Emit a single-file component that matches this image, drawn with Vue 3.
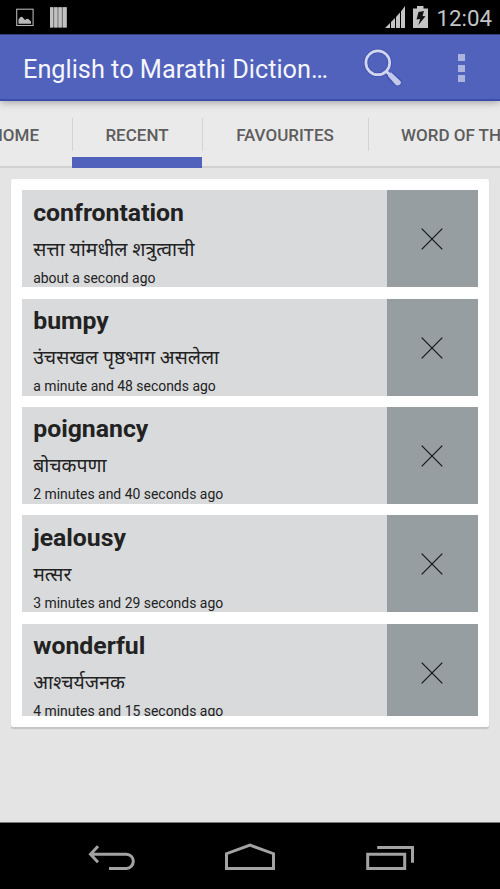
<script setup>
import { ref } from 'vue'

const tabs = [
  { name: 'HOME', cls: 'home' },
  { name: 'RECENT', cls: 'recent' },
  { name: 'FAVOURITES', cls: 'favourites' },
  { name: 'WORD OF THE DAY', cls: 'word' }
]
const activeTab = ref('RECENT')

const words = ref([
  { word: 'confrontation', meaning: 'सत्ता यांमधील शत्रुत्वाची', time: 'about a second ago' },
  { word: 'bumpy', meaning: 'उंचसखल पृष्ठभाग असलेला', time: 'a minute and 48 seconds ago' },
  { word: 'poignancy', meaning: 'बोचकपणा', time: '2 minutes and 40 seconds ago' },
  { word: 'jealousy', meaning: 'मत्सर', time: '3 minutes and 29 seconds ago' },
  { word: 'wonderful', meaning: 'आश्चर्यजनक', time: '4 minutes and 15 seconds ago' }
])

const remove = (item) => {
  words.value = words.value.filter((w) => w !== item)
}
</script>

<template>
  <div class="screen">
    <div class="status-bar">
      <svg class="notifications" width="54" height="24" viewBox="0 0 54 24">
        <rect x="0.7" y="4.2" width="16.4" height="16.3" fill="none" stroke="#b4b4b4" stroke-width="1.1" />
        <path d="M2.500 18.700v-4.200l2-2.400 1.500-.3 3 3.100 2-1.200 1.400.2 2.600 2.600v2.200z" fill="#b9b9b9" />
        <rect x="34" y="2.200" width="16.700" height="20.300" fill="#777" />
        <path d="M34 2.200h3v20.300h-3zM38.200 2.200h3.200v20.300h-3.200zM42.500 2.200h3.300v20.300h-3.300zM47 2.200h3.700v20.300H47z" fill="#c2c2c2" />
      </svg>
      <svg class="signal" width="44" height="24" viewBox="0 0 44 24">
        <path d="M0 23 5 18v5zM6 17l4-4v10H6zM11 12l4-4.500V23h-4zM16 6.500 20 1v22h-4z" fill="#c4c4c4" />
        <path d="M32 1h6.500v2.600H43V23H28V3.600h4z" fill="#c4c4c4" />
        <path d="m33.500 7 5.500-1-1.500 5 3 .3-7.300 9 2-6.300-3.700.5z" fill="#111" />
      </svg>
      <span class="clock">12:04</span>
    </div>

    <header class="action-bar">
      <h1>English to Marathi Diction…</h1>
      <svg class="search" width="40" height="40" viewBox="0 0 40 40">
        <g fill="none" stroke="#3444a0" stroke-opacity=".4">
          <circle cx="14.800" cy="14.800" r="11.900" stroke-width="4.700" />
          <path d="m24 24 2.500 2.700" stroke-width="5" />
          <path d="m28.600 28.600 5.800 5.400" stroke-width="9" stroke-linecap="round" />
        </g>
        <g fill="none" stroke="#d2d6ef">
          <circle cx="14.800" cy="14.800" r="11.900" stroke-width="2.700" />
          <path d="m23 23 4 4" stroke-width="3" />
        </g>
        <path d="m28.300 24.600 9 8.500q1.500 2-.5 3.500-1.800 1.800-4.200.2l-7.500-8.500q-.3-3.500 3.200-3.700z" fill="#c3c9ea" />
      </svg>
      <div class="overflow"><i></i><i></i><i></i></div>
    </header>

    <nav class="tabs">
      <div
        v-for="tab in tabs"
        :key="tab.name"
        class="tab"
        :class="[tab.cls, { active: activeTab === tab.name }]"
        @click="activeTab = tab.name"
      >
        <span>{{ tab.name }}</span>
      </div>
    </nav>

    <main>
      <div class="card">
        <ul class="list">
          <li v-for="item in words" :key="item.word" class="item">
            <div class="text">
              <h2>{{ item.word }}</h2>
              <p class="meaning">{{ item.meaning }}</p>
              <p class="time">{{ item.time }}</p>
            </div>
            <button class="delete" aria-label="delete" @click="remove(item)">
              <svg width="22" height="22" viewBox="0 0 22 22">
                <path d="M.7.7l20.600 20.600M21.300.7.7 21.300" stroke="#141617" stroke-width="1.200" />
              </svg>
            </button>
          </li>
        </ul>
      </div>
    </main>

    <footer class="nav-bar">
      <svg width="500" height="66" viewBox="0 0 500 66" fill="none" stroke="#a3a3a3" stroke-width="3">
        <path d="M90 31.200h36.500a6.800 7.100 0 0 1 0 14.200H109M98 23.200l-7.500 8 7.500 8" />
        <path d="M226.500 45.500V30.700l23.500-8.500 23.500 8.500v14.800z" />
        <path d="M367.700 31.200h37v14.300h-37zM377.200 24.500h35.300v15.300" />
      </svg>
    </footer>
  </div>
</template>

<style>
body {
  margin: 0;
  background: #e4e4e4;
}
</style>

<style scoped>
.screen {
  width: 500px;
  height: 889px;
  display: flex;
  flex-direction: column;
  overflow: hidden;
  background: #e4e4e4;
  font-family: Roboto, 'Noto Sans', 'Noto Sans Devanagari', sans-serif;
}

h1, h2, p, ul {
  margin: 0;
  padding: 0;
  font-weight: 400;
}

.status-bar {
  height: 34px;
  flex: none;
  display: flex;
  background: #000;
  padding: 5px 8px 5px 16px;
  box-sizing: border-box;
}

.signal {
  margin-left: auto;
}

.clock {
  width: 57px;
  margin-left: 6px;
  color: #c4c4c4;
  font-size: 22.300px;
  line-height: 27px;
  text-align: right;
  white-space: nowrap;
}

.action-bar {
  height: 67px;
  flex: none;
  display: flex;
  align-items: center;
  box-sizing: border-box;
  padding: 2px 35px 0 23px;
  background: #5162bc;
  border-top: 1px solid #35407d;
  border-bottom: 2px solid #3c4cab;
  position: relative;
  box-shadow: 0 1px 8px rgba(0, 0, 0, .35);
}

h1 {
  padding-top: 4px;
  color: #f5f6fb;
  font-size: 25.300px;
  line-height: 32px;
  white-space: nowrap;
}

.search {
  margin-left: auto;
  margin-right: 55px;
}

.overflow {
  display: flex;
  flex-direction: column;
  gap: 3.500px;
}

.overflow i {
  width: 7px;
  height: 7px;
  background: #acb3df;
}

.tabs {
  height: 67px;
  flex: none;
  display: flex;
  box-sizing: border-box;
  border-bottom: 2px solid #d1d1d1;
  background: #eaeaea;
}

.tab {
  flex: none;
  height: 67px;
  display: flex;
  justify-content: center;
  box-sizing: border-box;
  padding-top: 17px;
  color: #5d5d5d;
  font-size: 17px;
  font-weight: 500;
  line-height: 34px;
  white-space: nowrap;
  background: linear-gradient(#d4d4d4, #d4d4d4) left 17px / 1px 33px no-repeat;
}

.tab.home {
  width: 106px;
  margin-left: -34px;
  padding-right: 33px;
  justify-content: flex-end;
}

.tab.recent {
  width: 130px;
}

.tab.favourites {
  width: 166px;
}

.tab.word {
  padding-left: 33px;
}

.active {
  border-bottom: 11px solid #5162bc;
}

main {
  flex: 1;
  padding: 11.300px 11px 0;
}

.card {
  height: 548px;
  box-sizing: border-box;
  padding: 11px;
  background: #fff;
  border-radius: 2px;
  box-shadow: 0 1.500px 1px #c4c4c4;
}

.list {
  height: 526px;
  display: flex;
  flex-direction: column;
  gap: 11.330px;
  overflow: hidden;
  list-style: none;
}

.item {
  flex: none;
  height: 97px;
  display: flex;
  background: #d9dadc;
}

.text {
  flex: 1;
  padding: 7.300px 0 0 11.200px;
  color: #222;
}

h2 {
  font-size: 24.800px;
  font-weight: 700;
  line-height: 30px;
}

.meaning {
  font-size: 19.400px;
  line-height: 28px;
  height: 28px;
  margin-top: 8px;
}

.time {
  font-size: 13.950px;
  line-height: 18px;
  margin-top: 5px;
}

.delete {
  width: 91px;
  display: flex;
  align-items: center;
  justify-content: center;
  border: 0;
  padding: 1px 1px 0 0;
  background: #969ea1;
}

.nav-bar {
  height: 67px;
  flex: none;
  box-sizing: border-box;
  background: #000;
  border-top: 1px solid #777;
}
</style>
